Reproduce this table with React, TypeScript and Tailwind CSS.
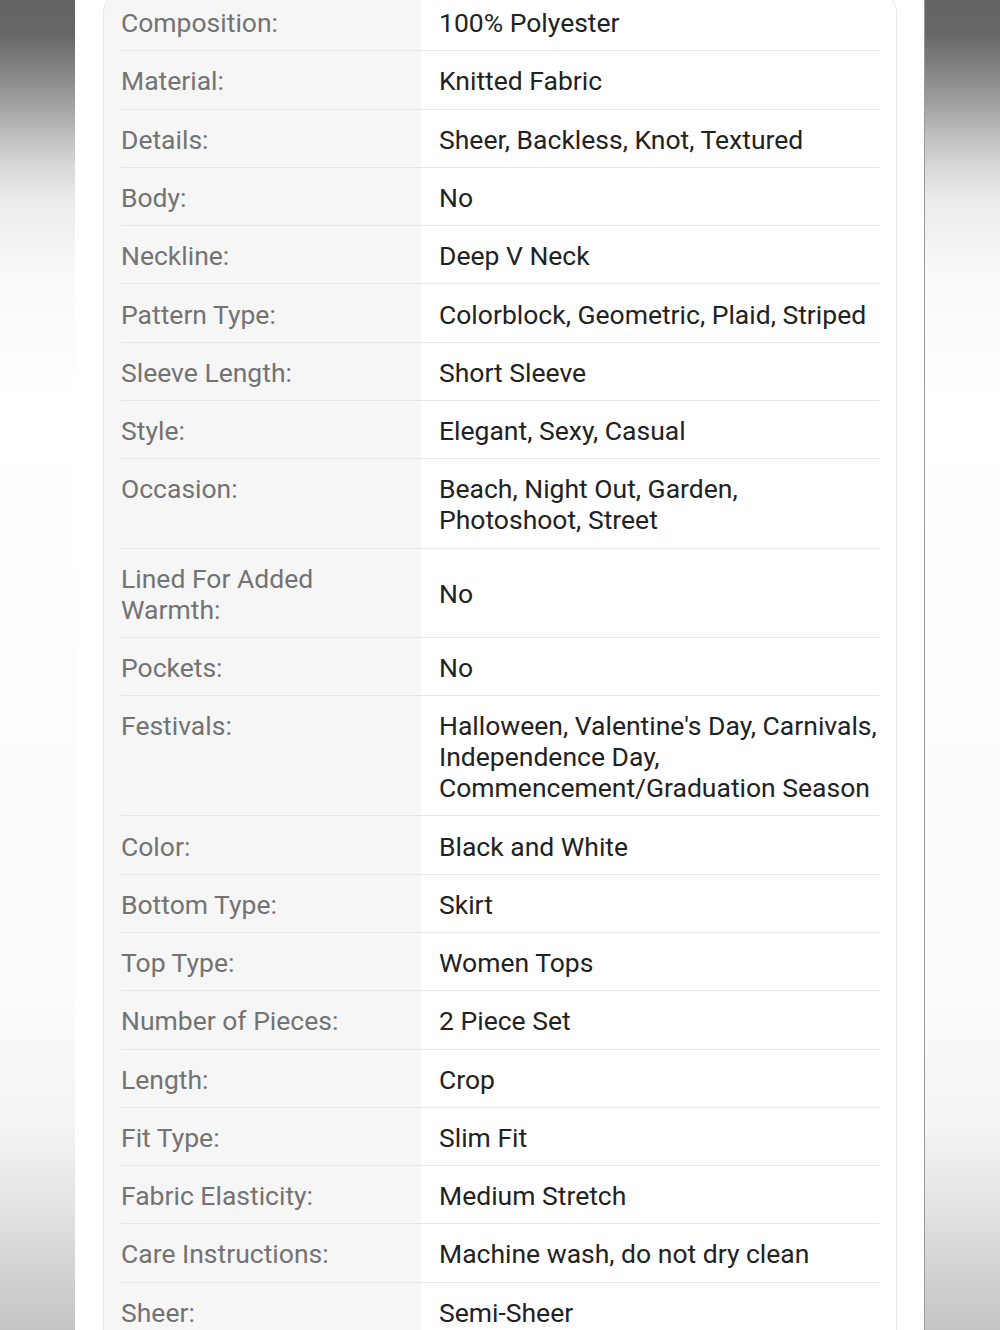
const specs: [string, string][] = [
  ["Composition:", "100% Polyester"],
  ["Material:", "Knitted Fabric"],
  ["Details:", "Sheer, Backless, Knot, Textured"],
  ["Body:", "No"],
  ["Neckline:", "Deep V Neck"],
  ["Pattern Type:", "Colorblock, Geometric, Plaid, Striped"],
  ["Sleeve Length:", "Short Sleeve"],
  ["Style:", "Elegant, Sexy, Casual"],
  ["Occasion:", "Beach, Night Out, Garden, Photoshoot, Street"],
  ["Lined For Added Warmth:", "No"],
  ["Pockets:", "No"],
  [
    "Festivals:",
    "Halloween, Valentine's Day, Carnivals, Independence Day, Commencement/Graduation Season",
  ],
  ["Color:", "Black and White"],
  ["Bottom Type:", "Skirt"],
  ["Top Type:", "Women Tops"],
  ["Number of Pieces:", "2 Piece Set"],
  ["Length:", "Crop"],
  ["Fit Type:", "Slim Fit"],
  ["Fabric Elasticity:", "Medium Stretch"],
  ["Care Instructions:", "Machine wash, do not dry clean"],
  ["Sheer:", "Semi-Sheer"],
];

function SpecRow({ label, value }: { label: string; value: string }) {
  return (
    <div className="grid grid-cols-[300px_1fr] border-b border-[#e6e6e6]">
      <div className="pt-[14.15px] pb-[12.15px] pr-[18px] text-[#737373]">
        {label}
      </div>
      <div className="flex items-center bg-white pt-[14.15px] pb-[12.15px] pl-[18px] text-[#222]">
        {value}
      </div>
    </div>
  );
}

export default function App() {
  return (
    <div
      className="flex h-[1330px] overflow-hidden bg-[linear-gradient(to_bottom,#646464_0%,#676767_2.5%,#818181_5%,#9d9d9d_7.5%,#bcbcbc_10%,#d8d8d8_12.5%,#ebebeb_15%,#f8f8f8_20%,#ffffff_30%,#fbfbfb_75%,#f3f3f3_85%,#e6e6e6_90%,#d4d4d4_95%,#c5c5c5_100%)]"
      style={{ fontFamily: "Roboto, 'Noto Sans', sans-serif" }}
    >
      <div className="w-[75px] shrink-0" />

      {/* page column */}
      <div className="w-[849px] shrink-0 bg-white pl-[28px] pr-[27px]">
        <div className="-mt-[8px] rounded-t-[20px] border border-[#e9e9e9] bg-[linear-gradient(to_right,#f6f6f6_0,#f6f6f6_317px,#ffffff_317px)] pl-[17px] pr-[17px] text-[26.5px] leading-[31px]">
          {specs.map(([label, value]) => (
            <SpecRow key={label} label={label} value={value} />
          ))}
        </div>
      </div>

      <div className="w-[76px] shrink-0 border-l border-[#9a9a9a]" />
    </div>
  );
}
